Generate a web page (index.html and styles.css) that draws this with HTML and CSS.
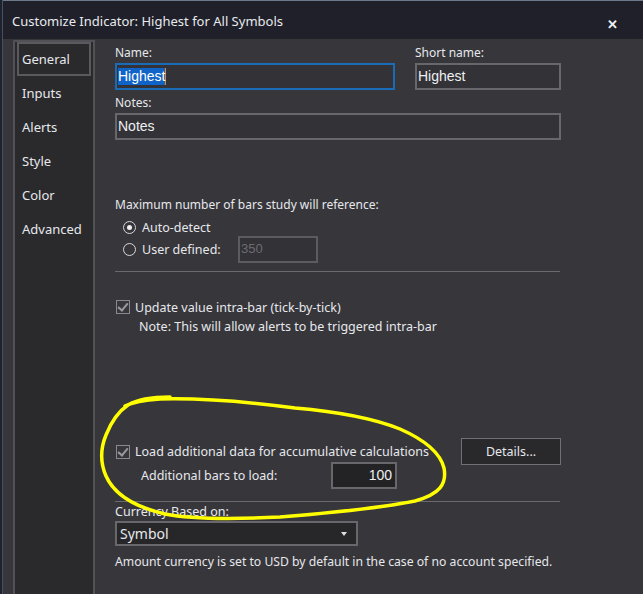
FILE: index.html
```html
<!DOCTYPE html>
<html lang="en">
<head>
  <meta charset="UTF-8">
  <title>Customize Indicator</title>
  <link rel="stylesheet" href="styles.css">
</head>
<body>
  <div class="dialog">
    <div class="titlebar">
      <span class="title">Customize Indicator: Highest for All Symbols</span>
      <span class="close">&#x2715;</span>
    </div>

    <div class="main">
      <ul class="nav">
        <li class="active">General</li>
        <li>Inputs</li>
        <li>Alerts</li>
        <li>Style</li>
        <li>Color</li>
        <li>Advanced</li>
      </ul>

      <div class="content">
        <div class="names">
          <div class="field name-field">
            <label>Name:</label>
            <div class="input focused"><span class="sel">Highest</span></div>
          </div>
          <div class="field short-field">
            <label>Short name:</label>
            <div class="input">Highest</div>
          </div>
        </div>

        <label class="notes-label">Notes:</label>
        <div class="input">Notes</div>

        <div class="max-label">Maximum number of bars study will reference:</div>
        <div class="radio-row auto-row">
          <span class="radio checked"></span>
          <span>Auto-detect</span>
        </div>
        <div class="radio-row user-row">
          <span class="radio"></span>
          <span class="user-text">User defined:</span>
          <div class="input small disabled">350</div>
        </div>

        <div class="sep sep-1"></div>

        <div class="check-row tick-row">
          <span class="check"></span>
          <span>Update value intra-bar (tick-by-tick)</span>
        </div>
        <div class="note">Note: This will allow alerts to be triggered intra-bar</div>

        <div class="load-row">
          <div class="check-row">
            <span class="check"></span>
            <span>Load additional data for accumulative calculations</span>
          </div>
          <button class="btn">Details...</button>
        </div>
        <div class="bars-row">
          <span>Additional bars to load:</span>
          <div class="input bars">100</div>
        </div>

        <div class="sep sep-2"></div>

        <div class="cur-label">Currency Based on:</div>
        <div class="select">
          <span>Symbol</span>
          <span class="arrow"></span>
        </div>
        <div class="amount">Amount currency is set to USD by default in the case of no account specified.</div>
      </div>
    </div>

    <svg class="scribble" width="643" height="594" viewBox="0 0 643 594">
      <path d="M170 397 C 150 397, 138 399, 128 405 C 116 413, 110 425, 106 435 C 101 447, 100 462, 106 476 C 114 494, 135 507, 165 514 C 195 520, 240 519, 280 517 C 330 513, 380 508, 415 501 C 440 494, 447 484, 444 468 C 440 452, 425 440, 400 429 C 370 417, 330 411, 295 408 C 250 402, 200 398, 160 399 C 145 400, 133 402, 125 406"
            fill="none" stroke="#ffff00" stroke-width="3.5" stroke-linecap="round"/>
    </svg>
  </div>
</body>
</html>
```

FILE: styles.css
```css
body {
  margin: 0;
  background: #1b2230;
  font-family: "Noto Sans", "Open Sans", sans-serif;
  font-size: 12px;
  color: #e6e8ec;
  overflow: hidden;
}
.dialog {
  position: relative;
  width: 640px;
  height: 594px;
  margin-left: 2px;
  border-left: 1px solid #4a505a;
  background: #37363b;
}
.titlebar {
  height: 39px;
  background: #1f2029;
  border-top: 1px solid #6c7a8c;
  box-sizing: border-box;
  display: flex;
  align-items: center;
  justify-content: space-between;
  padding: 2px 25px 0 9px;
}
.title {
  font-size: 13px;
  color: #e8eaee;
}
.close {
  font-size: 13px;
  font-weight: bold;
  color: #f0f0f0;
  margin-top: 5px;
}
.main {
  display: flex;
  height: 555px;
}
.nav {
  list-style: none;
  margin: 1px 0 0 10px;
  padding: 0 2px;
  width: 74px;
  background: #2a2a2d;
  border: 2px solid #525256;
  border-bottom: none;
}
.nav li {
  height: 34px;
  line-height: 30px;
  padding-left: 3px;
  font-size: 13px;
  border: 2px solid transparent;
  box-sizing: border-box;
}
.nav li.active {
  border-color: #5a5a5e;
}
.content {
  width: 446px;
  margin-left: 20px;
  padding-top: 6px;
}
label, .max-label, .cur-label {
  display: block;
  line-height: 16px;
}
.names {
  display: flex;
  gap: 20px;
}
.name-field { width: 280px; }
.short-field { width: 146px; }
.field label { margin-bottom: 2px; }
.input {
  height: 27px;
  box-sizing: border-box;
  border: 2px solid #68686c;
  background: #333237;
  font-family: "Liberation Sans", Arial, sans-serif;
  font-size: 14px;
  line-height: 20px;
  padding: 1px 1px;
  color: #eef0f2;
}
.input.focused {
  border-color: #1a6cb8;
}
.sel {
  background: #1064c8;
  color: #fff;
  padding: 0 0 1px 0;
  border-right: 1px solid #e88a20;
}
.notes-label {
  margin-top: 5px;
  margin-bottom: 2px;
}
.max-label {
  margin-top: 57px;
}
.radio-row {
  display: flex;
  align-items: center;
  height: 22px;
  padding-left: 8px;
  gap: 6px;
  font-size: 12.5px;
}
.auto-row { margin-top: 3px; }
.radio {
  width: 11px;
  height: 11px;
  border: 1px solid #d8d8dc;
  border-radius: 50%;
  position: relative;
}
.radio.checked::after {
  content: "";
  position: absolute;
  left: 3px;
  top: 3px;
  width: 5px;
  height: 5px;
  border-radius: 50%;
  background: #f0f0f0;
}
.user-row {
  height: 27px;
  margin-top: -2px;
}
.user-text { width: 90px; }
.input.small {
  width: 80px;
  font-size: 13px;
}
.input.disabled {
  color: #6c6c70;
  border-color: #5c5c60;
}
.sep {
  height: 1px;
  background: #6a6a6e;
  margin-right: 1px;
}
.sep-1 { margin-top: 8px; }
.check-row {
  display: flex;
  align-items: center;
  gap: 5px;
  height: 16px;
  font-size: 12.5px;
}
.check {
  width: 12px;
  height: 12px;
  border: 1px solid #8a8a8e;
  margin-left: 1px;
  position: relative;
}
.check::after {
  content: "";
  position: absolute;
  left: 3px;
  top: 0px;
  width: 4px;
  height: 8px;
  border: solid #9a9a9e;
  border-width: 0 2px 2px 0;
  transform: rotate(40deg);
}
.tick-row { margin-top: 27px; }
.note {
  margin-top: 4px;
  padding-left: 24px;
  line-height: 16px;
  font-size: 12.5px;
}
.load-row {
  margin-top: 103px;
  height: 27px;
  display: flex;
  align-items: center;
  justify-content: space-between;
}
.btn {
  width: 100px;
  height: 27px;
  background: #29292c;
  border: 1px solid #717175;
  color: #e6e8ec;
  font-family: "Noto Sans", "Open Sans", sans-serif;
  font-size: 12.5px;
  padding: 0;
}
.bars-row {
  margin-top: -3px;
  display: flex;
  align-items: center;
  height: 27px;
  padding-left: 26px;
  font-size: 12.5px;
}
.bars-row span { width: 190px; }
.input.bars {
  width: 66px;
  background: #232326;
  text-align: right;
  padding-right: 3px;
  color: #f0f0f0;
}
.sep-2 { margin-top: 12px; }
.cur-label {
  margin-top: 2px;
  font-size: 12.5px;
}
.select {
  margin-top: 1px;
  width: 243px;
  height: 25px;
  box-sizing: border-box;
  border: 2px solid #68686c;
  background: #27272a;
  display: flex;
  align-items: center;
  justify-content: space-between;
  padding: 0 9px 0 3px;
  font-size: 14px;
}
.arrow {
  width: 0;
  height: 0;
  border-left: 3px solid transparent;
  border-right: 3px solid transparent;
  border-top: 4px solid #e0e0e0;
}
.amount {
  margin-top: 8px;
  line-height: 16px;
  font-size: 12.2px;
  white-space: nowrap;
}
.scribble {
  position: absolute;
  left: -3px;
  top: 0;
  pointer-events: none;
}
```
